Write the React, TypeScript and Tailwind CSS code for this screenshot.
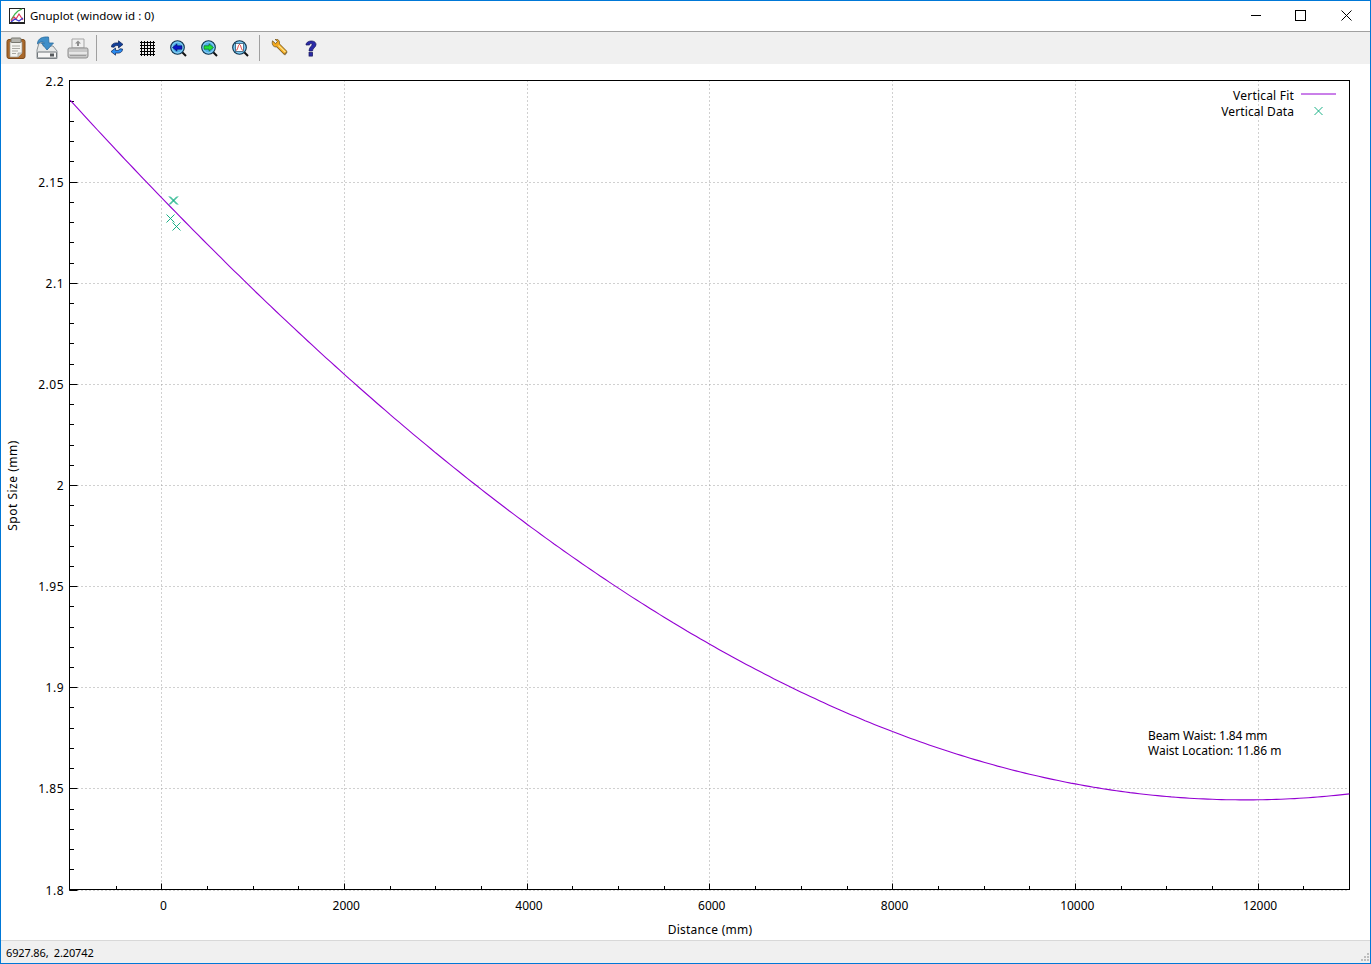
const font = "[font-family:'Noto_Sans',sans-serif]";

// plot geometry, in window pixels
const LEFT = 69.5;
const RIGHT = 1349.5;
const TOP = 80.5;
const BOTTOM = 889.5;
const px = (v: number) => 161.2 + v * 0.09138;
const py = (v: number) => BOTTOM - (v - 1.8) * 2022.5;

const xMajor = [0, 2000, 4000, 6000, 8000, 10000, 12000];
const xMinor = [-500, 500, 1000, 1500, 2500, 3000, 3500, 4500, 5000, 5500, 6500, 7000, 7500, 8500, 9000, 9500, 10500, 11000, 11500, 12500];
const yMajor = ["2.2", "2.15", "2.1", "2.05", "2", "1.95", "1.9", "1.85", "1.8"];
const yMinor = Array.from({ length: 41 }, (_, i) => 1.8 + i * 0.01);

const fit = Array.from({ length: 281 }, (_, i) => {
  const z = -1000 + i * 50;
  const w = 1.8443 * Math.sqrt(1 + ((z - 11860) / 20075) ** 2);
  return `${(px(z) + 0.3).toFixed(1)},${py(w).toFixed(1)}`;
}).join(" ");

const points = [
  [173, 200.5],
  [174, 200.5],
  [170.5, 218.5],
  [176.5, 226.5],
  [1318.5, 111],
];

function GnuplotLogo() {
  return (
    <svg width="16" height="16" viewBox="0 0 16 16">
      <rect x="0.5" y="0.5" width="15" height="15" fill="#fff" stroke="#222" />
      <path d="M2 12 L6 6 L9 3 L13 1" fill="none" stroke="#3cb54a" strokeWidth="1.2" />
      <path d="M2 13 L5 9 L7 11 L10 6 L14 12" fill="none" stroke="#e23a5a" strokeWidth="1.2" />
      <path d="M2 14 L6 11 L10 13 L14 10" fill="none" stroke="#3a3ad0" strokeWidth="1.2" />
      <path d="M1 14.5 H15" stroke="#222" />
    </svg>
  );
}

function ClipboardIcon() {
  return (
    <svg width="20" height="22" viewBox="0 0 20 22">
      <rect x="1" y="2.5" width="18" height="19" rx="2" fill="#a9682a" stroke="#7d4a1a" />
      <path d="M4 5 H16 V16 L12 20 H4 Z" fill="#f4f4f0" stroke="#9a9a92" strokeWidth="0.7" />
      <path d="M12 20 V16 H16" fill="#d8d8d2" stroke="#9a9a92" strokeWidth="0.7" />
      <path d="M6 9 H14 M6 11.5 H14 M6 14 H12 M6 16.5 H10" stroke="#a8a8a2" />
      <rect x="5" y="1" width="10" height="4.5" rx="1" fill="#b4b4ae" stroke="#77776f" />
    </svg>
  );
}

function SaveIcon() {
  return (
    <svg width="24" height="24" viewBox="0 0 24 24">
      <path d="M2 14 L4 7 H8 V10 H18 L22 15 V22.5 H2 Z" fill="#e6e8e8" stroke="#8a9094" />
      <rect x="2.5" y="16" width="19" height="6" rx="1" fill="#f6f6f6" stroke="#6f7579" />
      <rect x="15" y="17.5" width="4" height="3" fill="#55595c" />
      <path d="M2.5 8 C2.5 2 8 0.6 13.5 1 L14 7 H18.5 L12 14 L6.5 7 H9.5 C8 5.5 5 5.5 2.5 8 Z" fill="#3f8fc9" stroke="#2a6a9c" strokeWidth="0.8" />
    </svg>
  );
}

function PrintIcon() {
  return (
    <svg width="22" height="21" viewBox="0 0 22 21">
      <path d="M5 1 H17 V10 H5 Z" fill="#f0f0f0" stroke="#a5a5a5" />
      <path d="M11 2.5 L14 5.5 H12 V8 H10 V5.5 H8 Z" fill="#8d8d8d" />
      <path d="M2 10 H20 Q21 10 21 12 V18 Q21 20 19 20 H3 Q1 20 1 18 V12 Q1 10 2 10 Z" fill="#c8c8c8" stroke="#8f8f8f" />
      <path d="M2 15 H20" stroke="#f2f2f2" strokeWidth="1.5" />
      <path d="M3 17.5 H19" stroke="#9c9c9c" />
    </svg>
  );
}

function RefreshIcon() {
  return (
    <svg width="14" height="16" viewBox="0 0 14 16">
      <path d="M1.5 7 C1.5 3.5 4.5 2.5 8.5 3 V0.8 L13 4.4 L8.5 8 V5.6 C6 5.3 4.6 5.8 4.2 7.2 Z" fill="#123f9a" stroke="#0b1f50" strokeWidth="0.7" />
      <path d="M12.5 9 C12.5 12.5 9.5 13.5 5.5 13 V15.2 L1 11.6 L5.5 8 V10.4 C8 10.7 9.4 10.2 9.8 8.8 Z" fill="#2a8bf0" stroke="#0b1f50" strokeWidth="0.7" />
    </svg>
  );
}

function GridIcon() {
  return (
    <svg width="15" height="15" viewBox="0 0 15 15">
      <path d="M0 1.5 H15 M0 4.5 H15 M0 7.5 H15 M0 10.5 H15 M0 13.5 H15 M1.5 0 V15 M4.5 0 V15 M7.5 0 V15 M10.5 0 V15 M13.5 0 V15" stroke="#000" />
    </svg>
  );
}

function Magnifier({ children }: { children: React.ReactNode }) {
  return (
    <svg width="17" height="17" viewBox="0 0 17 17">
      <path d="M12 12 L16 16" stroke="#111" strokeWidth="2" />
      <circle cx="7.5" cy="7.5" r="6.8" fill="#4fb0e8" stroke="#12324a" strokeWidth="1.1" />
      <circle cx="7.5" cy="7.5" r="5.4" fill="none" stroke="#a4dcf6" strokeWidth="0.8" />
      {children}
    </svg>
  );
}

function WrenchIcon() {
  return (
    <svg width="18" height="18" viewBox="0 0 18 18">
      <path d="M6 3 L16.5 13.5 L14 16.5 L3.5 6" fill="#8a7a5a" />
      <path d="M1.5 1.8 L4.5 4.6 L6.6 2.6 L4 0.3 C7.2 -0.3 9 2 8.4 4.8 L16 12.4 L13.2 15.4 L5.6 7.8 C2.8 8.4 0.4 6 1.5 1.8 Z" fill="#f2a81e" stroke="#6d5320" strokeWidth="0.8" />
      <path d="M7.5 6.5 L14.5 13.2" stroke="#fde28a" strokeWidth="1.2" />
    </svg>
  );
}

function HelpIcon() {
  return (
    <svg width="12" height="17" viewBox="0 0 12 17">
      <path d="M1 5 C1 0 11 -0.5 11 4.5 C11 7.5 7.5 8 7.5 11 H4 C4 7 7 6.5 7 4.5 C7 3 5 3 4.5 5 Z" fill="#2b2ba8" stroke="#14145a" strokeWidth="0.7" />
      <rect x="4" y="12.5" width="3.6" height="3.6" fill="#2b2ba8" stroke="#14145a" strokeWidth="0.7" />
    </svg>
  );
}

function ToolButton({ children }: { children: React.ReactNode }) {
  return <div className="flex w-[31px] h-full items-center justify-center">{children}</div>;
}

function Separator() {
  return (
    <div className="flex w-[8px] h-full items-center pl-[3px]">
      <div className="w-px h-[26px] bg-[#a0a0a0]" />
    </div>
  );
}

function Toolbar() {
  return (
    <div className="flex h-[32px] items-center bg-[#f0f0f0]">
      <div className="flex w-[30px] h-full items-center justify-center"><ClipboardIcon /></div>
      <ToolButton><SaveIcon /></ToolButton>
      <ToolButton><PrintIcon /></ToolButton>
      <Separator />
      <ToolButton><RefreshIcon /></ToolButton>
      <ToolButton><GridIcon /></ToolButton>
      <ToolButton>
        <Magnifier><path d="M2.5 7.5 L7 3.8 V5.8 H12 V9.2 H7 V11.2 Z" fill="#0a14c8" stroke="#04084a" strokeWidth="0.5" /></Magnifier>
      </ToolButton>
      <ToolButton>
        <Magnifier><path d="M12.5 7.5 L8 3.8 V5.8 H3 V9.2 H8 V11.2 Z" fill="#1ee03a" stroke="#04480c" strokeWidth="0.5" /></Magnifier>
      </ToolButton>
      <ToolButton>
        <Magnifier>
          <rect x="3.5" y="3.5" width="8" height="8" fill="#fff" stroke="#12324a" strokeWidth="0.6" />
          <path d="M4 10.5 C6 10 6 4.5 7.5 4.5 C9 4.5 9 10 11 10.5" fill="none" stroke="#e02020" strokeWidth="0.9" />
        </Magnifier>
      </ToolButton>
      <Separator />
      <ToolButton><WrenchIcon /></ToolButton>
      <ToolButton><HelpIcon /></ToolButton>
    </div>
  );
}

function Plot() {
  const text = `${font} fill-black text-[12px]`;
  return (
    <svg width="1369" height="876" viewBox="1 64 1369 876" className="block bg-white">
      {/* grid */}
      <g stroke="#a0a0a0" strokeDasharray="1 3" fill="none">
        {xMajor.map((v) => (
          <path key={v} d={`M${Math.round(px(v)) + 0.5} ${TOP} V${BOTTOM}`} />
        ))}
        {yMajor.map((v) => (
          <path key={v} d={`M${LEFT} ${Math.round(py(Number(v))) + 0.5} H${RIGHT}`} />
        ))}
      </g>
      {/* ticks */}
      <g stroke="#000" fill="none">
        {xMajor.map((v) => (
          <path key={v} d={`M${Math.round(px(v)) + 0.5} ${BOTTOM} v-6`} />
        ))}
        {xMinor.map((v) => (
          <path key={v} d={`M${Math.round(px(v)) + 0.5} ${BOTTOM} v-3.5`} />
        ))}
        {yMajor.map((v) => (
          <path key={v} d={`M${LEFT} ${Math.round(py(Number(v))) + 0.5} h8`} />
        ))}
        {yMinor.map((v) => (
          <path key={v} d={`M${LEFT} ${Math.round(py(v)) + 0.5} h4.5`} />
        ))}
        <rect x={LEFT} y={TOP} width={RIGHT - LEFT} height={BOTTOM - TOP} />
      </g>
      {/* series */}
      <polyline points={fit} fill="none" stroke="#9400d3" strokeWidth="1.1" />
      <path d="M1301 94 H1336" stroke="#9400d3" />
      <g stroke="#00a878" strokeWidth="0.9" fill="none">
        {points.map(([x, y], i) => (
          <path key={i} d={`M${x - 4} ${y - 4} l8 8 M${x + 4} ${y - 4} l-8 8`} />
        ))}
      </g>
      {/* labels */}
      {yMajor.map((v) => (
        <text key={v} x="64" y={py(Number(v)) + 5} textAnchor="end" className={`${text} tracking-[0.5px]`}>{v}</text>
      ))}
      {xMajor.map((v) => (
        <text key={v} x={px(v) + 2.3} y="910" textAnchor="middle" className={text}>{v}</text>
      ))}
      <text x="710" y="934" textAnchor="middle" className={`${text} tracking-[0.25px]`}>Distance (mm)</text>
      <text transform="translate(17 485.5) rotate(-90)" textAnchor="middle" className={`${text} tracking-[0.5px]`}>Spot Size (mm)</text>
      <text x="1294" y="100" textAnchor="end" className={`${text} tracking-[0.2px]`}>Vertical Fit</text>
      <text x="1294" y="116" textAnchor="end" className={`${text} tracking-[0.1px]`}>Vertical Data</text>
      <text x="1148" y="739.5" className={`${text} tracking-[-0.15px]`}>Beam Waist: 1.84 mm</text>
      <text x="1148" y="754.5" className={text}>Waist Location: 11.86 m</text>
    </svg>
  );
}

export default function App() {
  return (
    <div className={`flex h-[964px] w-[1371px] flex-col overflow-hidden border border-[#0078d7] bg-white text-black ${font}`}>
      <div className="flex h-[30px] items-center pl-[8px] text-[11.5px]">
        <GnuplotLogo />
        <span className="ml-[5px]">Gnuplot (window id : 0)</span>
        <div className="ml-auto flex h-full items-center pb-px">
          <div className="flex w-[44px] h-full items-center justify-center">
            <div className="h-px w-[10px] bg-black" />
          </div>
          <div className="flex w-[45px] h-full items-center justify-center">
            <div className="size-[11px] border border-black" />
          </div>
          <div className="flex w-[47px] h-full items-center justify-center">
            <svg width="11" height="11" viewBox="0 0 11 11">
              <path d="M0.5 0.5 L10.5 10.5 M10.5 0.5 L0.5 10.5" stroke="#000" />
            </svg>
          </div>
        </div>
      </div>
      <div className="h-px bg-[#a0a0a0]" />
      <Toolbar />
      <Plot />
      <div className="flex h-[23px] items-center border-t border-[#d8d8d8] bg-[#f0f0f0] pl-[5px] pt-[2px] text-[11px] tracking-[-0.15px]">
        <span className="whitespace-pre">6927.86,  2.20742</span>
        <svg width="12" height="12" viewBox="0 0 12 12" className="ml-auto self-end">
          <path d="M9 2h2v2H9zM6 5h2v2H6zM9 5h2v2H9zM3 8h2v2H3zM6 8h2v2H6zM9 8h2v2H9z" fill="#bdbdbd" />
        </svg>
      </div>
    </div>
  );
}
